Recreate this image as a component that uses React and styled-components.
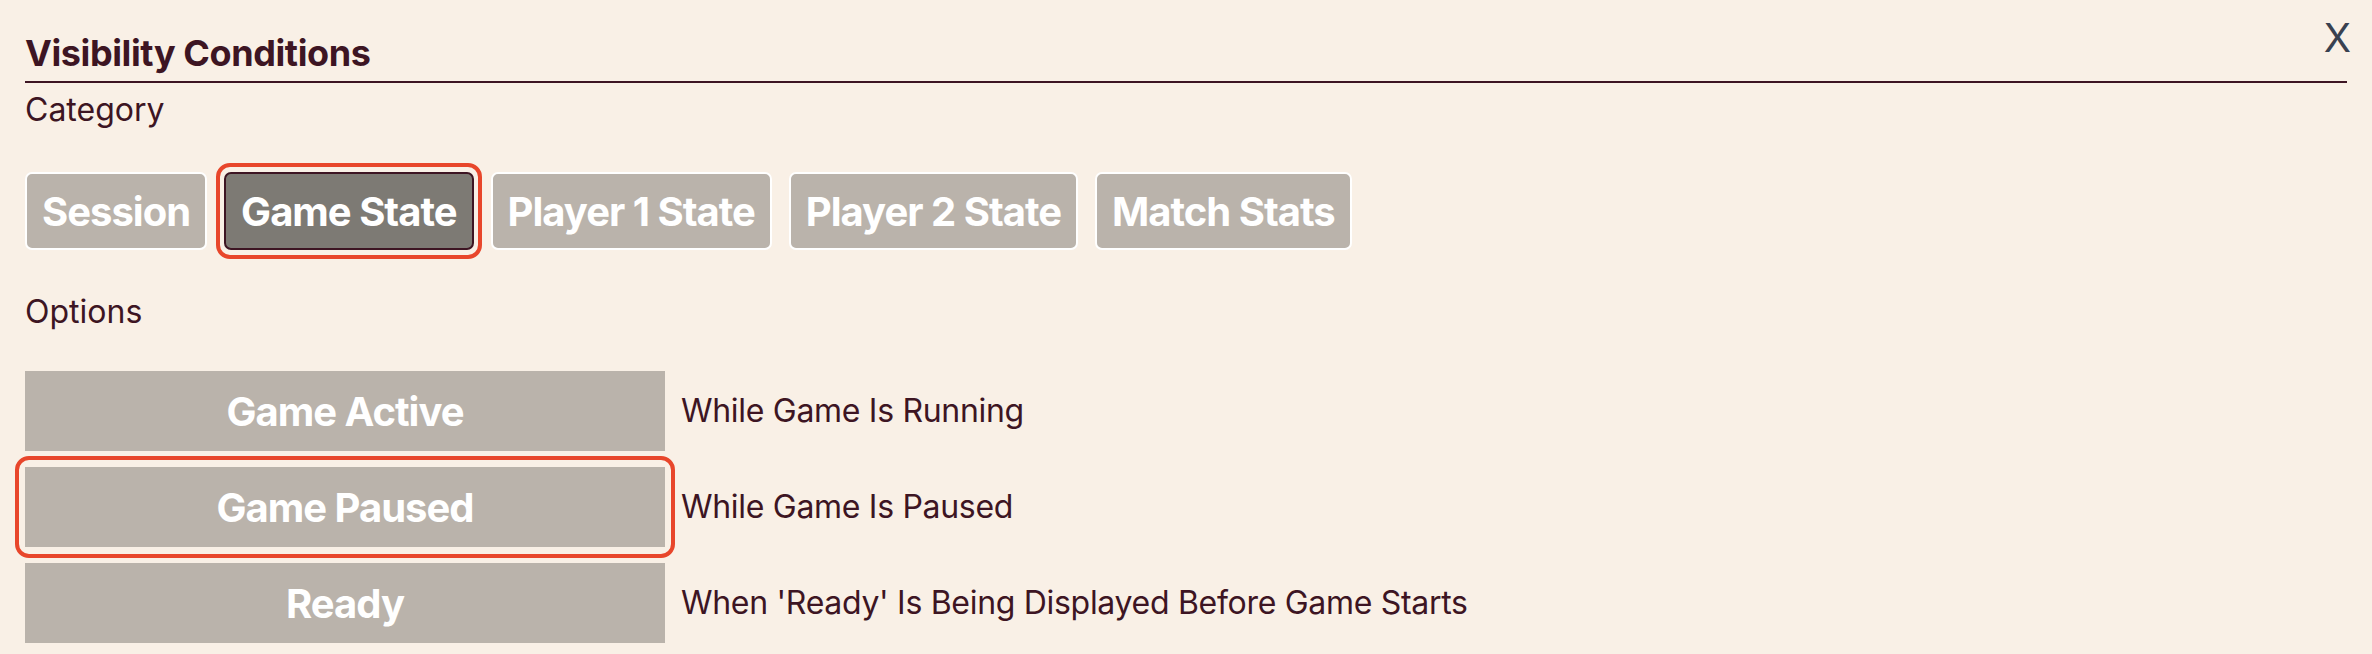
import React from 'react';
import styled, { createGlobalStyle } from 'styled-components';

const GlobalStyle = createGlobalStyle`
  html, body {
    margin: 0;
    padding: 0;
    background: #f9f0e6;
  }
  body {
    font-family: Inter, "Noto Sans", sans-serif;
    color: #3d1523;
  }
`;

const Panel = styled.div`
  position: relative;
  padding: 31px 25px;
`;

const Title = styled.h2`
  margin: 0;
  font-size: 36px;
  line-height: 44px;
  font-weight: 700;
  letter-spacing: -0.4px;
  padding-bottom: 6px;
  border-bottom: 2px solid #3d1523;
`;

const CloseButton = styled.button`
  position: absolute;
  top: 14px;
  right: 21px;
  background: none;
  border: 0;
  padding: 0;
  font-family: Inter, sans-serif;
  font-size: 40px;
  line-height: 48px;
  font-weight: 400;
  color: #394150;
  cursor: pointer;
`;

const SectionLabel = styled.div`
  margin-top: ${(p) => p.$gap}px;
  font-size: 32px;
  line-height: 40px;
  font-weight: 400;
`;

const CategoryRow = styled.div`
  display: flex;
  gap: 17px;
  margin-top: 42px;
`;

const Highlightable = styled.button`
  position: relative;
  font-family: Inter, sans-serif;
  font-weight: 700;
  font-size: 40px;
  letter-spacing: -1px;
  color: #ffffff;
  cursor: pointer;
  &::after {
    content: '';
    display: ${(p) => (p.$highlighted ? 'block' : 'none')};
    position: absolute;
    inset: -11px -10px;
    border: 4px solid #e8462b;
    border-radius: 14px;
    pointer-events: none;
  }
`;

const CategoryButton = styled(Highlightable)`
  box-sizing: border-box;
  height: 78px;
  padding: 0 15px;
  border: 2px solid ${(p) => (p.$selected ? '#3d1523' : '#ffffff')};
  border-radius: 7px;
  background: ${(p) => (p.$selected ? '#7d7a74' : '#bab3ab')};
`;

const OptionList = styled.div`
  display: flex;
  flex-direction: column;
  gap: 16px;
  margin-top: 39px;
`;

const OptionRow = styled.div`
  display: flex;
  align-items: center;
  gap: 16px;
`;

const OptionButton = styled(Highlightable)`
  width: 640px;
  height: 80px;
  border: 0;
  padding: 0;
  background: #bab3ab;
`;

const OptionDesc = styled.span`
  font-size: 32px;
  line-height: 40px;
  font-weight: 400;
  letter-spacing: -0.3px;
`;

const categories = ['Session', 'Game State', 'Player 1 State', 'Player 2 State', 'Match Stats'];

const options = [
  { label: 'Game Active', desc: 'While Game Is Running' },
  { label: 'Game Paused', desc: 'While Game Is Paused', highlighted: true },
  { label: 'Ready', desc: "When 'Ready' Is Being Displayed Before Game Starts" },
];

export default function App() {
  return (
    <>
      <GlobalStyle />
      <Panel>
        <CloseButton>X</CloseButton>
        <Title>Visibility Conditions</Title>
        <SectionLabel $gap={7}>Category</SectionLabel>
        <CategoryRow>
          {categories.map((c) => (
            <CategoryButton
              key={c}
              $selected={c === 'Game State'}
              $highlighted={c === 'Game State'}
            >
              {c}
            </CategoryButton>
          ))}
        </CategoryRow>
        <SectionLabel $gap={42}>Options</SectionLabel>
        <OptionList>
          {options.map((o) => (
            <OptionRow key={o.label}>
              <OptionButton $highlighted={o.highlighted}>{o.label}</OptionButton>
              <OptionDesc>{o.desc}</OptionDesc>
            </OptionRow>
          ))}
        </OptionList>
      </Panel>
    </>
  );
}
